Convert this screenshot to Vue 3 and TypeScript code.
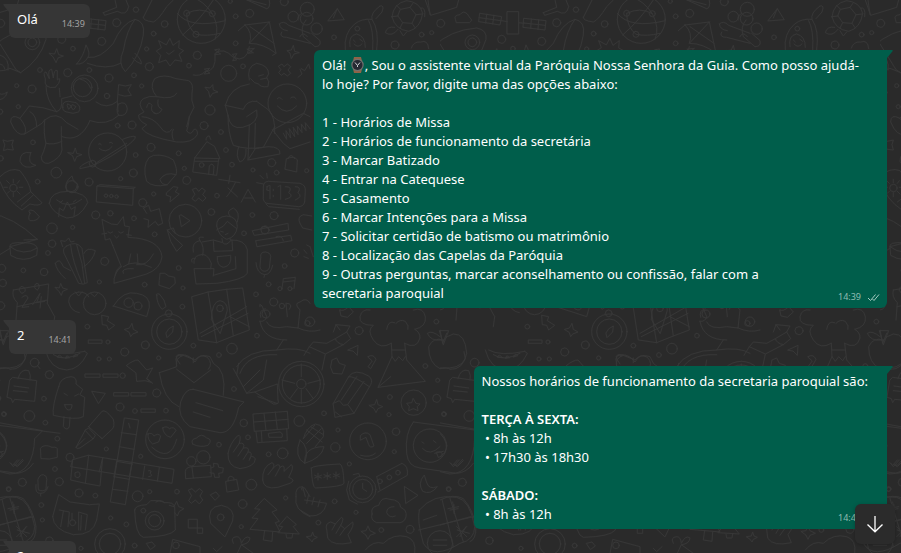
<script setup lang="ts">
interface Line {
  text: string
  bold?: boolean
}

interface Message {
  id: number
  outgoing: boolean
  time: string
  lines: Line[]
  watch?: boolean
}

const plain = (...rows: string[]): Line[] => rows.map((text) => ({ text }))

const messages: Message[] = [
  { id: 1, outgoing: false, time: '14:39', lines: plain('Olá') },
  {
    id: 2,
    outgoing: true,
    time: '14:39',
    watch: true,
    lines: plain(
      ', Sou o assistente virtual da Paróquia Nossa Senhora da Guia. Como posso ajudá-',
      'lo hoje? Por favor, digite uma das opções abaixo:',
      '',
      '1 - Horários de Missa',
      '2 - Horários de funcionamento da secretária',
      '3 - Marcar Batizado',
      '4 - Entrar na Catequese',
      '5 - Casamento',
      '6 - Marcar Intenções para a Missa',
      '7 - Solicitar certidão de batismo ou matrimônio',
      '8 - Localização das Capelas da Paróquia',
      '9 - Outras perguntas, marcar aconselhamento ou confissão, falar com a',
      'secretaria paroquial',
    ),
  },
  { id: 3, outgoing: false, time: '14:41', lines: plain('2') },
  {
    id: 4,
    outgoing: true,
    time: '14:41',
    lines: [
      { text: 'Nossos horários de funcionamento da secretaria paroquial são:' },
      { text: '' },
      { text: 'TERÇA À SEXTA:', bold: true },
      { text: ' • 8h às 12h' },
      { text: ' • 17h30 às 18h30' },
      { text: '' },
      { text: 'SÁBADO:', bold: true },
      { text: ' • 8h às 12h' },
    ],
  },
  { id: 5, outgoing: false, time: '14:42', lines: plain('2') },
]

// Wallpaper doodles, drawn at three units per pixel on a 1320 x 1680 tile.
const doodles: string[] = [
  // globe
  'M532 40Q570 88 676 62M548 105Q600 60 640 0M560 40Q600 20 637 41Q660 85 645 118M560 40Q560 80 588 103Q620 110 660 100M575 -8Q610 0 637 41',
  // whale
  'M230 192Q250 170 258 135Q272 160 264 172Q300 178 340 130Q365 70 405 58Q436 64 430 105Q420 170 376 215Q352 190 370 152Q380 90 405 58M264 172Q250 195 230 192M262 190Q320 212 362 190M405 160Q426 180 424 192Q410 188 398 174',
  // starburst
  'M510 116L519 136L538 122L536 144L551 152L537 163L546 184L525 180L510 198L498 180L476 188L482 166L469 153L484 143L476 122L498 134ZM500 158L507 163L522 152',
  // kite
  'M735 75L808 66L828 160Q790 130 748 130Q760 100 735 75ZM808 66L748 130M750 80L822 130M735 75L715 92M828 160L818 166M748 140Q740 190 700 172Q670 140 645 160Q650 215 615 215Q600 230 580 225M742 148L760 158L744 160L762 146ZM698 164L710 180L698 182L710 162ZM645 150L662 162L645 164L658 148ZM614 208L630 220L612 222L628 206Z',
  // satellite
  'M120 40L185 50L180 75L117 65ZM140 43L137 69M162 46L158 72M118 53L183 62M202 35H236V102H202ZM185 62L202 65M236 68L252 70M252 55L318 62L315 90L250 82ZM274 57L272 85M296 59L294 88M251 69L316 76',
  // bottle and upper wedge
  'M310 38L350 22L344 -5M310 38L314 46L352 34Q380 50 386 20L378 0M430 52Q428 62 460 66Q475 60 500 20L520 0M430 52L456 0M734 -3L800 26Q812 24 808 0M734 -3L798 14',
  // people at the top right
  'M838 72Q850 60 866 76L930 100M838 72Q840 90 862 92M845 96Q836 112 860 112L930 130M900 110Q908 92 922 110M894 60Q890 48 905 40',
  // rocket
  'M-20 140Q30 90 110 84Q142 90 138 118Q120 180 62 218Q46 212 40 196L0 132M62 218L30 205Q0 220 -20 205M0 165Q30 175 24 210M-10 192Q12 190 14 206',
  // astronaut
  'M166 262Q130 268 136 236Q128 216 138 216L148 236Q142 208 155 208L160 234Q162 206 172 212L172 240Q184 228 176 250L166 262M138 258Q138 300 170 335Q188 330 185 296L216 288M178 265L180 290M188 322Q186 303 206 304L228 308Q246 320 236 336Q220 344 200 336Q186 332 188 322ZM204 312L214 318L206 328L202 318ZM218 314L228 320L220 330L214 322ZM170 335Q130 320 88 318L60 355Q32 340 32 366Q50 410 74 402L110 380Q130 370 134 360M60 355Q85 385 74 402M90 335Q110 345 110 380M134 360Q170 330 200 368L234 388M134 360Q130 400 138 430Q130 460 124 470Q124 492 146 490Q182 475 186 450Q184 430 184 380M138 430Q160 436 186 424M186 410Q240 430 270 362M288 306Q320 330 352 304L354 335M270 362Q320 380 356 346M352 304L356 254Q378 262 394 254L384 270L394 286Q374 292 356 284M356 312Q378 300 382 326Q380 350 356 346Q346 330 356 312ZM240 237Q264 242 272 265',
  // ringed planet
  'M268 484Q236 498 240 506Q290 500 370 445Q408 420 406 410Q396 406 368 418M296 432Q300 428 304 434M328 428Q334 424 338 430M298 446Q318 462 336 440M290 488L380 430',
  // dinosaur
  'M470 290Q446 262 464 236Q490 220 528 236L566 242Q582 250 576 280Q572 300 582 322L568 350Q566 380 560 392Q572 410 582 388Q594 386 592 404Q578 430 530 426Q440 410 426 386L440 374Q414 362 416 345L432 336Q410 310 430 296Q448 286 470 290Q520 300 530 280M520 420Q512 400 520 388M440 322Q445 300 456 316Q450 336 466 340M474 300Q470 322 486 328Q478 345 462 340M426 350Q460 352 480 380Q500 410 516 388M568 350L560 380',
  // hugging pair
  'M748 240Q738 200 770 190Q806 196 806 222L800 232Q810 244 804 260Q780 262 776 252L764 248L752 236M776 228L790 224M782 238L800 234M748 252Q690 260 676 316L684 346Q684 400 700 436Q740 450 790 442L824 380M676 316L730 328Q740 300 770 304M684 346Q690 390 728 382Q780 370 770 330L740 350M770 304L806 330Q826 350 824 400M748 375L744 480L840 462Q842 440 804 440L764 446L766 370M716 440Q706 470 720 486Q740 480 738 448M744 480L766 446',
  'M832 296Q838 288 846 298M872 294Q880 286 888 296M832 318Q860 350 890 318',
  // brush and hand bag
  'M818 390L910 340L930 350M818 390L850 430L870 446L930 426M850 400L860 418L858 392L872 414L868 386L884 410L880 382L894 404L892 378L906 398L904 372L918 392L916 368L930 386M860 476Q884 466 892 480L890 516L856 508ZM864 476Q872 456 884 476',
  // house
  'M620 426L584 474L660 476L644 440ZM584 474L578 516L650 526L656 478M626 522L628 498Q636 486 642 500L640 524M584 484H656M618 420Q618 408 628 408L632 418',
  // sticker
  'M462 466Q494 462 520 480Q534 510 528 524L502 554Q460 564 440 544Q426 500 446 474ZM528 524Q496 514 480 538Q484 556 502 554',
  // sparkles
  'M148 160L164 162L170 146L176 164L190 168L174 174L168 188L160 172ZM862 152L874 150L880 136L884 154L898 158L882 162L874 176L870 160ZM616 262L630 264L638 254L640 270L654 276L638 280L630 292L626 276ZM204 458L220 460L226 444L230 460L246 464L230 470L224 484L218 468Z',
  'M836 198L846 192L852 200L862 192L872 200L864 210L872 220L862 228L852 220L844 226L836 218L842 210ZM904 206L914 212L926 192L930 206M894 232L906 222L900 208M10 420L22 424L40 420L36 434L40 450L22 448L10 452L14 436ZM92 458Q60 452 60 484Q72 512 108 496Q80 492 92 458ZM-20 300Q16 304 22 276Q4 290 -10 276',
  // lotion and flame
  'M0 530Q30 500 60 512Q90 550 92 575L126 608Q120 620 90 612L66 630Q20 600 0 545M92 575L52 606M100 585L64 618M40 548V538M40 578V590M22 562H12M58 562H68M28 550L20 542M52 550L58 542M28 574L22 580M52 574L60 582M200 572Q190 548 216 528Q220 548 232 552Q230 580 206 574ZM90 640Q80 626 100 632Q110 640 118 650Q112 664 90 662Q82 656 90 640Z',
  // bowl with plant
  'M148 610Q150 574 205 574Q262 580 263 608Q240 655 200 654Q158 640 148 610ZM170 600Q205 630 245 598M176 650L178 624L190 632L202 606L214 628L226 620L222 648M180 608L188 602M220 606L228 600',
  // message card and clock
  'M292 558L400 566L398 616L290 606ZM292 558L300 554L406 562L400 566M790 560Q790 544 806 544L900 550Q918 556 916 572L914 606Q910 620 896 620L800 610Q788 606 790 590ZM798 612L806 620L898 628M800 560L810 556V596M802 560L800 570L808 572M820 568V572M820 586V590M834 560L842 556V598M856 560Q880 560 866 578Q886 590 856 598M886 560Q906 560 894 578Q910 590 886 600M770 548L790 552M780 526L790 536M800 520L802 534',
  // letters and lightning
  'M656 538L720 548M690 526L686 550M706 548Q690 580 680 590M684 564L712 590M724 606L744 568L766 606M734 594H758M500 578L520 560L534 562L526 576L538 582L510 606L512 590L500 586ZM578 568L588 564L596 574L606 564L616 572L608 584L618 594L608 604L596 594L586 604L576 596L584 584Z',
  // lid and pan
  'M-30 640Q40 650 112 718L72 720M112 718L30 740M30 740Q24 726 70 728Q112 728 112 748L110 766Q70 790 32 766L30 740Q70 770 112 744M30 745L-20 776',
  // cactus
  'M200 738Q230 720 246 745L262 848Q250 856 236 850L192 760Q186 745 200 738ZM212 736Q216 780 246 850M230 734Q250 790 254 850M188 740L182 722L196 724L206 714L212 726L222 724M166 790Q178 770 190 800L212 812M196 836Q168 810 166 790M252 760Q260 740 286 752Q280 780 252 800',
  // cat
  'M338 736L330 716L316 720L306 658L334 672L352 674L370 650L374 678L388 680L384 712Q480 716 486 770Q482 806 440 822L342 850Q340 820 364 800L338 736M364 800Q350 800 346 826M370 800Q400 776 454 802M370 820Q360 804 400 806M324 696Q330 704 338 696M356 696Q362 704 370 696M344 708L350 714L356 708M392 762L386 792M412 762L414 792M460 762Q440 800 410 794M320 700L306 702M380 704L394 706',
  // puzzle, tag
  'M440 640L430 624L446 616L452 634L478 626L488 670L474 676L466 664L444 682L446 660L432 656M502 690L512 724L530 754L548 736L520 710L502 690L520 684L526 700M544 645L570 662L544 680L538 648Z',
  'M758 692L864 670L866 690L764 706ZM782 686Q796 670 808 690M768 722L872 706L876 722L772 740ZM828 710Q846 704 850 722',
  // gardener
  'M650 678Q648 650 680 648Q712 650 712 680Q708 712 680 718Q656 708 650 678M650 690Q674 680 682 664L710 686M690 648Q676 634 700 624Q722 636 712 666M666 716L668 728L640 720L606 726M668 728Q678 740 692 722L690 716M640 720L642 754L698 752L696 720M692 720Q736 718 742 750V820Q730 840 650 850L588 852L582 806L642 806L640 828M652 770L692 766Q696 798 670 802Q650 798 652 770M706 770L708 806L640 826M582 790Q580 770 596 766Q620 754 634 790L632 806M580 756Q574 726 600 722Q614 740 608 766M600 722Q590 708 610 712M576 786Q570 772 586 776M662 694L670 696M684 700L676 704',
  // microphone and notes
  'M782 770Q780 756 796 756Q812 758 812 770L808 804Q804 814 794 814Q780 812 780 800ZM768 788Q770 820 794 824Q812 824 818 796M794 824L792 832M846 866L850 836L886 832L882 866M850 846L884 842M900 670Q890 650 910 644L935 648M900 670L908 684L935 690M920 760L912 750M912 770L925 775M930 740L940 770M930 740L920 735',
  // calendar and cupcake
  'M40 870L146 852L142 910L164 950L160 980M40 870Q34 890 52 908L48 960M52 920L142 900M66 892Q80 880 84 894L66 922L86 920M98 914L120 880L110 908L134 904M124 890L120 924M58 870Q60 852 74 864Q80 876 66 880ZM104 862Q104 846 116 852Q120 866 112 870Z',
  // tomatoes and croissant
  'M236 876Q206 880 206 905Q212 934 238 938M236 876Q260 876 266 890M226 876L236 888L246 876M272 880L284 890L294 878M340 918Q370 870 410 880Q452 886 448 922L440 950Q380 930 340 918Z',
  // badge and map
  'M470 886Q466 880 478 882Q496 900 498 920L486 928Q470 910 470 886ZM478 840L480 820Q496 816 506 828L524 832L526 850L508 866L478 856ZM576 890L624 876L680 868L728 864L748 990L700 1008L650 1028L596 1020ZM624 876L650 1028M680 868L700 1008M600 1000L740 920M604 1010L744 940M690 950L748 980M660 1000L634 958Q636 904 660 902Q682 906 682 930ZM498 998Q504 984 520 978L518 996L502 1012Z',
  // musician
  'M780 920Q776 908 786 918L800 950Q796 966 780 964M782 952Q776 930 796 926M800 966Q810 990 860 980L894 984L900 930Q880 910 900 906Q920 890 930 910M858 910L862 950M860 910Q880 910 868 928M780 964Q790 1020 860 1020M850 1020L830 1050M710 1100Q740 1050 830 1050Q900 1040 930 1060M720 1120Q740 1060 830 1064M894 984Q930 1000 960 990',
  // sparkles, sticks, dashes
  'M306 946L326 950L322 962L344 976L326 990L320 976L308 974ZM374 988L388 984L396 970L400 988L414 996L398 1002L392 1010L388 998ZM166 862L178 864L182 850L188 864L202 868L188 874L184 886L178 876ZM266 1020H306V1030H266ZM0 990L8 1030L20 1000M256 1122H300V1132H256ZM310 1122H354V1132H310ZM342 1178H386V1188H342ZM394 1178H438V1188H394ZM424 1227H466V1237H424Z',
  // watermelon
  'M136 1050Q150 1108 200 1110Q240 1108 262 1060L254 1054M146 1050Q180 1070 254 1054M160 1064Q190 1086 240 1060M172 1070Q178 1060 186 1072ZM196 1074Q200 1062 208 1072ZM220 1070Q226 1058 232 1066Z',
  // speech bag
  'M30 1140L38 1132L110 1142L104 1204L44 1198L38 1208L34 1196L22 1192ZM54 1136Q62 1104 86 1112Q94 1126 90 1140M42 1158L86 1164M40 1172L82 1176M0 1104Q60 1110 76 1076L72 1055',
  // popsicle
  'M176 1160Q180 1132 214 1130Q232 1132 228 1152L248 1168L240 1184L254 1192L250 1250Q230 1262 160 1246Q156 1220 176 1160ZM192 1250L190 1280Q202 1294 208 1280L210 1252M192 1180L202 1186M236 1182L224 1188M194 1214H216Q216 1230 206 1230Q196 1228 194 1214Z',
  // cursor and pin
  'M276 1174L316 1180L296 1210ZM380 1096Q400 1080 414 1080L440 1110L458 1104L440 1136L456 1148L436 1142L410 1144L408 1120ZM440 1136L458 1150',
  // pen
  'M266 1280L306 1234Q316 1226 340 1258Q344 1280 338 1286L306 1316L266 1280ZM256 1290L266 1284L286 1306L280 1316ZM256 1290L228 1342Q230 1348 240 1344L280 1316M228 1342L254 1316M306 1316L300 1310',
  // crossword
  'M374 1254L416 1260L376 1514L332 1506ZM364 1298L408 1304M358 1340L402 1348M350 1384L396 1392M342 1430L388 1438M338 1468L384 1474M266 1366L522 1408L516 1450L212 1400L218 1380ZM308 1374L298 1416M266 1366L256 1450L300 1458L308 1374M218 1380L212 1440L256 1450M350 1384L342 1430M396 1392L388 1430M434 1398L428 1438M478 1402L472 1444M386 1270L390 1284M226 1418Q240 1410 240 1426Q236 1438 226 1430ZM446 1412Q458 1410 450 1420Q462 1428 446 1430',
  // heart-eyed face
  'M444 1302Q456 1296 462 1308Q474 1298 482 1308L476 1326L458 1332Q442 1320 444 1302ZM488 1284Q500 1276 508 1286Q522 1278 528 1292L512 1312Q490 1306 488 1284ZM456 1342Q510 1390 530 1318',
  // chat bubbles
  'M478 1118Q510 1108 530 1100Q524 1074 550 1066L585 1080Q600 1060 630 1070L640 1090Q680 1110 670 1186M478 1118Q490 1200 536 1220M530 1108L582 1148L632 1110M580 1168L732 1206L716 1222Q700 1300 660 1298L570 1280Q530 1250 542 1206Q556 1164 580 1168ZM588 1208L668 1232M580 1236L630 1252M580 1074V1088',
  // shoe and wheel
  'M700 1106L740 1180L790 1140L800 1080M740 1180L764 1176L832 1152L834 1200Q840 1214 820 1212L764 1176M730 1160L780 1110M710 1125L716 1090M774 1190L830 1210',
  'M904 1130V1092M904 1170V1210M884 1150L846 1140M924 1150L962 1140M892 1166L870 1196M918 1166L940 1196',
  // gift boxes
  'M760 1242L862 1234L866 1286L764 1294ZM792 1240L798 1290M826 1236L832 1288M762 1266L864 1258M768 1294L772 1328L862 1322L860 1286M784 1294L786 1326M806 1300L840 1296Q850 1300 846 1312H808Z',
  // clouds
  'M578 1332Q570 1318 590 1314Q604 1298 620 1314Q640 1318 624 1336Q600 1344 578 1332ZM122 1344Q130 1334 146 1338L156 1342Q174 1340 172 1350L172 1372Q150 1380 124 1376ZM530 1090Q520 1060 550 1066',
  // tag with circles
  'M556 1414Q556 1402 576 1400L632 1396L634 1430L558 1436ZM576 1402L580 1434M634 1404L642 1400L640 1390L654 1392L656 1402L670 1404L668 1418L656 1420L658 1432L644 1432L642 1420L630 1418',
  // hands
  'M684 1360Q690 1330 712 1308Q726 1300 718 1330M684 1360Q682 1400 720 1406Q766 1400 766 1376Q752 1360 748 1380M718 1330Q736 1326 730 1344Q750 1340 744 1356Q762 1354 748 1380M718 1330L700 1356M730 1344L714 1368M744 1356L730 1378M788 1440Q786 1400 816 1388Q826 1392 818 1406Q838 1384 840 1402Q856 1390 852 1414L874 1394Q884 1400 866 1432Q890 1440 870 1450L834 1462Q790 1470 788 1440M818 1406L804 1424M840 1402L826 1428M888 1490Q884 1460 908 1460L916 1490M888 1490Q880 1530 930 1550',
  // avatar bubble
  'M-20 1265L128 1292L104 1316Q100 1420 30 1422L-20 1410M0 1300Q30 1330 14 1358L0 1370M32 1390L40 1400L58 1380M46 1396L52 1400L70 1382',
  // microphone, lock
  'M114 1438Q118 1424 130 1424Q142 1428 140 1438L138 1468Q130 1476 116 1470ZM108 1454Q104 1482 122 1480Q138 1480 144 1460M122 1480V1488M678 1444L710 1438L716 1470L682 1476ZM684 1442Q684 1426 696 1430Q704 1432 702 1440M606 1480',
  'M566 1470L576 1466L586 1476L598 1466L608 1474L600 1488L608 1500L598 1512L586 1500L574 1510L566 1502L574 1488ZM632 1484L648 1476L658 1488L646 1500ZM566 1558H592V1584H566ZM592 1584H608V1600H592V1584',
  // pill and cat box
  'M0 1500Q40 1480 70 1496Q100 1530 108 1580Q108 1620 90 1625M0 1575L92 1550M30 1495L70 1625M24 1526L56 1520M38 1506L44 1540M52 1590L88 1600M78 1580L60 1610M158 1550L176 1484L210 1506L268 1514L298 1512L290 1560Q280 1606 220 1604Q160 1590 158 1550ZM178 1530L208 1536L204 1580M190 1534L182 1580M216 1540V1560M236 1590V1536L262 1544L256 1590M244 1546L242 1590',
  // camera
  'M404 1530Q404 1516 440 1514L452 1502Q480 1500 494 1508Q520 1506 524 1520L526 1590Q510 1610 430 1612Q406 1606 404 1530ZM508 1516L522 1520L530 1504L536 1520L552 1526L538 1534L532 1548L524 1538M468 1506Q480 1496 494 1508',
  // pin, trees, presents
  'M674 1610L632 1570Q618 1520 664 1516Q708 1524 698 1562ZM792 1496L764 1526L780 1528L756 1554L774 1556L750 1588L840 1596L826 1568L838 1564L816 1536L830 1530ZM794 1592L790 1620L816 1624L818 1596M860 1550L836 1578L848 1580L834 1598L898 1602L880 1580L888 1574ZM858 1602L860 1614H876L878 1602M700 1630Q690 1612 710 1610Q722 1610 724 1630Q736 1604 750 1614Q748 1632 724 1634L712 1660M724 1634L760 1660M510 1660L518 1618L600 1640V1660M440 1630L456 1626L466 1638L452 1648ZM640 1645L650 1655L666 1640',
  // magnifier handle and heart
  'M112 1096L120 1106M540 1092Q515 1060 545 1064Q570 1065 585 1086Q600 1058 622 1072Q640 1090 625 1108',
  // gingerbread and triangle
  'M918 60Q900 80 910 110L945 140Q964 140 960 122L935 100M984 62L1012 26L1032 58ZM1000 54L1012 26',
  // avocado
  'M1036 150Q1030 100 1064 72Q1085 55 1116 58Q1138 90 1130 150M1050 140Q1044 106 1070 102Q1096 108 1096 142M1060 120L1066 126M1080 118L1088 124M1062 132Q1074 146 1086 132M1116 58Q1110 40 1140 18Q1154 14 1146 36L1128 56M1106 62Q1122 90 1118 150',
  // turtle
  'M1176 50Q1180 10 1220 2Q1260 6 1268 40Q1262 84 1226 94Q1184 88 1176 50ZM1202 28L1230 22L1248 44L1236 70L1208 68L1194 48ZM1202 28L1190 16M1230 22L1240 8M1248 44L1268 42M1236 70L1246 84M1208 68L1200 84M1194 48L1176 50M1184 82Q1160 78 1156 98Q1176 112 1194 88M1262 24Q1278 20 1274 50M1200 92L1210 108L1220 96',
  'M1276 0L1292 46L1370 22L1376 0M1290 44L1284 0M1366 58Q1360 46 1380 44Q1390 30 1402 42L1410 54Q1420 60 1408 68H1370ZM1234 144Q1240 124 1262 126Q1284 118 1286 146',
  // volcano and smoke
  'M1172 1130L1134 1162L1276 1144L1220 1080L1214 1030M1134 1162L1176 1070L1174 1030M1176 1070L1186 1084L1196 1070L1208 1082L1216 1070M1176 1050H1214M1174 1030Q1140 1050 1120 1020Q1100 990 1120 976Q1076 976 1080 950Q1086 925 1110 930M1214 1030Q1250 1050 1260 1014Q1260 996 1244 988Q1280 980 1276 950Q1270 920 1240 930M1188 970Q1200 956 1216 964Q1228 978 1224 988M1160 988Q1164 960 1184 968',
  // apple
  'M1330 1020Q1300 1010 1286 1040Q1286 1090 1320 1106Q1344 1100 1350 1108Q1390 1110 1400 1060Q1396 1000 1360 1002Q1340 1008 1330 1020ZM1330 1034L1318 992H1346L1330 1034M1320 1010Q1296 990 1282 1000Q1292 1024 1324 1020',
  // arm with cards
  'M1000 996L1008 974L1050 978L1040 996L1052 1016L1030 1034Q1010 1030 1006 1016L1040 996M1008 974L1020 990M1006 1016L980 1030L940 1026L928 1040L912 1066M1030 1034L976 1062L966 1110M928 1040L976 1062M1044 1050L1074 1036L1072 1066L1060 1054ZM1104 1070Q1120 1060 1128 1078L1112 1106L1104 1100L1116 1084Z',
  // puzzle and pencil
  'M992 1100L996 1080L1010 1074L1018 1090L1036 1096L1026 1122L1000 1120ZM1000 1210L1046 1130Q1064 1104 1106 1128Q1120 1140 1112 1154L1062 1240L1006 1252ZM1000 1210L1018 1202L1030 1216L1044 1214L1062 1240M1046 1130Q1060 1126 1108 1160M1024 1200L1070 1130M1044 1212L1092 1144M1006 1236L1024 1250',
  'M1108 1216L1124 1214L1130 1198L1134 1214L1148 1220L1134 1226L1128 1238L1122 1226ZM1240 1196L1248 1210L1260 1212L1252 1220L1254 1232L1240 1226L1226 1232L1228 1220L1220 1210L1234 1208ZM1020 930Q1030 936 1046 920L1060 936L1042 952L1024 948Z',
  // corn
  'M910 1316Q920 1280 946 1272Q976 1276 970 1310L946 1340M920 1290L966 1326M932 1280L970 1304M920 1330L964 1286M910 1316L944 1276M900 1320Q930 1340 914 1390Q880 1370 900 1320M914 1390Q910 1340 972 1340Q966 1374 914 1390',
  // clock face
  'M1082 1306Q1096 1292 1110 1304L1122 1338Q1110 1346 1106 1334L1098 1312L1082 1320ZM1082 1366Q1110 1374 1126 1360',
  // card, watch, cloud
  'M934 1404Q936 1396 1020 1392Q1030 1396 1032 1450Q1030 1460 946 1464Q936 1460 934 1404ZM954 1420V1440M944 1426L964 1434M964 1426L944 1434M982 1418V1438M972 1424L992 1432M992 1424L972 1432M1008 1416V1436M1000 1422L1018 1430M1018 1422L1000 1430M1130 1430L1206 1390Q1226 1398 1222 1426L1134 1476M1130 1430L1140 1470M1046 1444L1040 1470L1048 1500L1072 1512M1060 1424L1076 1420L1080 1430M1088 1450V1466L1100 1474M1116 1542Q1110 1520 1136 1516Q1144 1488 1170 1498Q1200 1500 1202 1522Q1222 1530 1218 1550Q1214 1566 1200 1568H1130Q1110 1560 1116 1542Z',
  'M1182 1520Q1160 1520 1160 1538Q1168 1556 1186 1548M1214 1460L1254 1486L1218 1510ZM1272 1426Q1252 1450 1268 1474Q1292 1486 1312 1460Q1286 1470 1280 1448Z',
  // contact card
  'M1240 1266L1500 1300M1240 1266Q1214 1300 1220 1360Q1224 1400 1260 1404L1370 1420Q1400 1418 1420 1390M1266 1326L1272 1330M1300 1322L1308 1328M1268 1346Q1290 1370 1320 1340M1304 1360L1330 1354M1350 1388L1358 1396L1372 1380M1364 1394L1372 1396L1388 1378M1310 1356Q1330 1352 1326 1368L1316 1372Z',
  // calculator pill
  'M1258 1530Q1300 1480 1370 1492Q1410 1500 1424 1580Q1424 1620 1380 1630Q1300 1680 1270 1630Q1250 1560 1258 1530ZM1256 1590L1420 1550M1326 1498L1360 1640M1270 1560L1310 1546M1350 1530L1374 1526M1362 1514V1540M1370 1580L1400 1610M1400 1580L1370 1610M1300 1620H1340M1300 1636H1340',
  // rock hand and sparkle
  'M980 1590Q974 1570 992 1566L1006 1572L1024 1552Q1034 1554 1022 1576L1034 1586L1058 1566Q1064 1576 1044 1604L1054 1628Q1000 1640 984 1616ZM1006 1572L996 1590M1022 1576L1008 1600M1034 1586L1020 1606M1084 1594L1098 1592L1104 1578L1110 1592L1126 1600L1110 1606L1104 1618L1098 1606ZM920 1610L934 1608L938 1596L942 1608L952 1612L940 1618L936 1626L930 1618ZM906 1470Q900 1460 914 1464L930 1490M914 1500L980 1510Q970 1550 930 1548L900 1530M926 1484L920 1510M942 1492L936 1514M960 1500L954 1520',
  'M1096 1650Q1120 1620 1150 1630Q1180 1600 1220 1610Q1250 1620 1244 1660',
]

// Circles of the wallpaper: x, y, radius.
const rings: number[][] = [
  [604, 58, 72], [560, 40, 9], [637, 41, 9], [588, 103, 9], [686, 220, 24], [254, 265, 40], [248, 262, 28],
  [323, 456, 57], [278, 491, 10], [862, 310, 58], [97, 127, 22], [97, 127, 13], [605, 495, 7], [40, 564, 11],
  [880, 50, 16], [920, 56, 19], [556, 122, 0], [556, 662, 49], [318, 587, 5], [334, 588, 5], [350, 590, 5],
  [284, 910, 34], [386, 908, 14], [414, 918, 12], [508, 995, 53], [508, 995, 38], [506, 940, 10], [660, 925, 10],
  [495, 1318, 58], [904, 1152, 68], [904, 1152, 57], [904, 1152, 14], [574, 1384, 14], [610, 1372, 20],
  [464, 1562, 28], [464, 1562, 18], [430, 1532, 7], [662, 1552, 10], [330, 1632, 46], [330, 1632, 32],
  [104, 1088, 13], [218, 1568, 9], [528, 1636, 10], [1241, 1208, 38], [1104, 1324, 55], [1088, 1468, 40],
  [1088, 1468, 30], [1140, 1444, 7], [1168, 1432, 7], [1194, 1418, 7], [1290, 1337, 50], [1320, 1630, 38],
  [216, 560, 18], [840, 866, 6], [870, 866, 6], [846, 918, 8], [798, 942, 12], [795, 690, 12], [930, 965, 14],
  [922, 28, 21], [950, 86, 17], [922, 970, 8],
  [408, 29, 8], [494, 72, 10], [350, 68, 12], [461, 101, 7], [440, 147, 6], [448, 200, 12], [305, 124, 12],
  [219, 146, 7], [203, 218, 12], [120, 210, 7], [268, 210, 7], [327, 234, 12], [402, 226, 7], [425, 258, 6],
  [321, 288, 8], [96, 267, 12], [50, 257, 6], [55, 320, 6], [353, 377, 7], [396, 375, 12], [99, 427, 7],
  [169, 518, 16], [113, 545, 7], [267, 546, 12], [407, 465, 7], [453, 442, 12], [536, 460, 7], [400, 519, 12],
  [362, 536, 6], [592, 166, 12], [567, 197, 7], [630, 330, 15], [612, 377, 12], [663, 396, 7], [678, 450, 7],
  [696, 494, 7], [759, 510, 6], [815, 488, 12], [830, 518, 7], [560, 541, 12], [553, 505, 6], [707, 49, 7],
  [749, 40, 12], [707, 130, 7], [729, 199, 7], [691, 4, 6], [853, 5, 12], [0, 335, 8], [2, 475, 8],
  [920, 512, 6], [185, 118, 12], [428, 608, 12], [461, 582, 6], [402, 655, 7], [464, 703, 7],
  [156, 685, 16], [218, 682, 6], [287, 645, 12], [331, 640, 8], [144, 759, 7], [156, 731, 11], [132, 816, 11],
  [70, 811, 7], [5, 805, 12], [8, 849, 11], [314, 784, 12], [298, 846, 6], [434, 854, 7], [536, 804, 7],
  [549, 864, 6], [634, 636, 10], [651, 587, 7], [757, 645, 7], [822, 647, 12], [732, 700, 7], [884, 759, 12],
  [854, 798, 7], [806, 853, 7], [768, 883, 7], [821, 906, 12], [262, 980, 7], [324, 1026, 6], [436, 1035, 12],
  [374, 1056, 12], [297, 1077, 6], [328, 1077, 6], [476, 1074, 6], [547, 920, 7], [580, 1037, 7],
  [696, 1046, 16], [657, 1065, 7], [771, 1007, 7], [2, 917, 12], [148, 1124, 12], [132, 1196, 7],
  [88, 1248, 16], [12, 1242, 7], [136, 1268, 7], [172, 1316, 7], [210, 1372, 12], [319, 1347, 6],
  [360, 1221, 12], [368, 1127, 8], [470, 1179, 12], [405, 1233, 7], [498, 1232, 7], [422, 1369, 6],
  [165, 1407, 7], [67, 1447, 12], [26, 1467, 7], [178, 1445, 12], [237, 1479, 12], [286, 1487, 7],
  [124, 1515, 7], [127, 1560, 6], [332, 1554, 6], [379, 1573, 7], [413, 1489, 16], [449, 1475, 6],
  [404, 1637, 7], [243, 1645, 6], [148, 1622, 11], [531, 1475, 7], [657, 1334, 7], [731, 1269, 11],
  [744, 1312, 7], [702, 1167, 7], [898, 1263, 16], [806, 1363, 7], [848, 1360, 16], [754, 1454, 16],
  [728, 1512, 13], [724, 1580, 6], [857, 1494, 6], [1002, 112, 7], [1072, 86, 7], [1185, 135, 12],
  [1265, 104, 7], [1295, 98, 6], [1322, 70, 12], [1309, 965, 7], [1077, 992, 12], [1276, 1098, 7],
  [1313, 1141, 6], [1170, 1191, 7], [1310, 1195, 12], [1167, 1244, 6], [972, 1240, 7], [1014, 1290, 6],
  [1006, 1342, 14], [1048, 1392, 6], [1188, 1295, 11], [1183, 1355, 6], [1332, 1243, 6], [1004, 1504, 7],
  [1068, 1537, 6], [955, 1568, 7], [1144, 1590, 7], [1230, 1588, 12], [1346, 1468, 6],
]
</script>

<template>
  <main class="chat">
    <svg class="wallpaper" aria-hidden="true">
      <defs>
        <g id="doodle-art">
          <path v-for="(d, i) in doodles" :key="'d' + i" :d="d" />
          <circle v-for="(r, i) in rings" :key="'r' + i" :cx="r[0]" :cy="r[1]" :r="r[2]" />
        </g>
        <pattern id="doodle-tile" width="440" height="560" patternUnits="userSpaceOnUse">
          <g class="strokes" transform="scale(0.333333)">
            <use href="#doodle-art" />
            <use href="#doodle-art" x="-1320" />
          </g>
        </pattern>
      </defs>
      <rect width="100%" height="100%" fill="url(#doodle-tile)" />
    </svg>

    <ol class="messages">
      <li
        v-for="m in messages"
        :key="m.id"
        class="message"
        :class="[m.outgoing ? 'outgoing' : 'incoming', { wide: m.lines.length > 10 }]"
      >
        <svg class="tail" viewBox="0 0 6 8" aria-hidden="true">
          <path :d="m.outgoing ? 'M0 0H5Q6.500 0 5.500 1.200L0 8Z' : 'M6 0H1Q-.5 0 .5 1.200L6 8Z'" />
        </svg>
        <div class="text">
          <p v-for="(line, i) in m.lines" :key="i" class="line" :class="{ bold: line.bold }"><template v-if="m.watch && i === 0">Olá! <svg class="watch" viewBox="0 0 13 16" role="img" aria-label="relógio"><path d="M3 0h7l1 4H2zM2 12h9l-1 4H3z" fill="#8f6347" /><circle cx="6.500" cy="8" r="6.200" fill="#70706f" /><circle cx="6.500" cy="8" r="5" fill="#262a33" /><path d="M4 5.500L6.500 8.500L9 5.500M6.500 8.500V10" fill="none" stroke="#cfd3d6" stroke-width="1" /></svg></template>{{ line.text }}</p>
        </div>
        <div class="meta">
          <time>{{ m.time }}</time>
          <svg v-if="m.outgoing" class="ticks" viewBox="0 0 13 9" role="img" aria-label="Entregue">
            <path d="M1 5L3.500 7.500L8.500 1.500M5.500 6L7 7.500L12 1.500" />
          </svg>
        </div>
      </li>
    </ol>

    <button class="to-bottom" type="button" aria-label="Ir para o fim">
      <svg viewBox="0 0 18 18" aria-hidden="true">
        <path d="M9 1V16.500M1.500 9.500L9 16.800L16.500 9.500" stroke-width="1.300" />
      </svg>
    </button>
  </main>
</template>

<style>
body {
  margin: 0;
  background: #2a2a2a;
}
</style>

<style scoped>
.chat {
  position: relative;
  height: 100vh;
  overflow: hidden;
  background: #2a2a2a;
  color: #fff;
  font-family: "Segoe UI", "Noto Sans", "Open Sans", sans-serif;
  font-size: 13px;
  line-height: 19px;
}

.wallpaper {
  position: absolute;
  inset: 0;
  width: 100%;
  height: 100%;
}

.strokes {
  fill: none;
  stroke: #363636;
  stroke-width: 3;
  stroke-linejoin: round;
  stroke-linecap: round;
}

.messages {
  position: relative;
  display: flex;
  flex-direction: column;
  align-items: flex-start;
  gap: 12px;
  margin: 0;
  padding: 4px 14px 4px 9px;
  list-style: none;
}

.message {
  position: relative;
  box-sizing: border-box;
  max-width: 100%;
  border-radius: 6px;
}

.wide {
  width: 573px;
}

.incoming {
  display: flex;
  align-items: flex-end;
  gap: 24px;
  padding: 6px 5px 5px 8px;
  border-top-left-radius: 0;
  background: #363636;
}

.incoming .text {
  padding-bottom: 4px;
}

.outgoing {
  display: grid;
  align-self: flex-end;
  padding: 6px 7px 5px 8px;
  border-top-right-radius: 0;
  background: #005e4b;
}

.outgoing .text,
.outgoing .meta {
  grid-area: 1 / 1;
}

.outgoing .text {
  padding-right: 12px;
}

.outgoing .meta {
  place-self: end;
}

.tail {
  position: absolute;
  top: 0;
  width: 6px;
  height: 8px;
}

.incoming .tail {
  right: 100%;
  fill: #363636;
}

.outgoing .tail {
  left: 100%;
  fill: #005e4b;
}

.line {
  min-height: 19px;
  margin: 0;
  white-space: pre-wrap;
}

.bold {
  font-weight: 600;
}

.watch {
  width: 13px;
  height: 16px;
  margin: 0 1px;
  vertical-align: -3px;
}

.meta {
  display: flex;
  align-items: center;
  gap: 6px;
  color: #a3a3a3;
  font-size: 9px;
  line-height: 12px;
}

.incoming .meta {
  padding-bottom: 3px;
}

.outgoing .meta {
  color: #8fbdb2;
}

.ticks {
  width: 13px;
  height: 9px;
  fill: none;
  stroke: #a5cbc2;
  stroke-width: 1;
}

.to-bottom {
  position: absolute;
  right: 6px;
  bottom: 9px;
  display: grid;
  place-items: center;
  width: 40px;
  height: 40px;
  padding: 0;
  border: 0;
  border-radius: 6px;
  background: #2b2b2b;
  box-shadow: 0 1px 4px rgba(0, 0, 0, 0.25);
}

.to-bottom svg {
  width: 18px;
  height: 18px;
  fill: none;
  stroke: #fff;
}
</style>
